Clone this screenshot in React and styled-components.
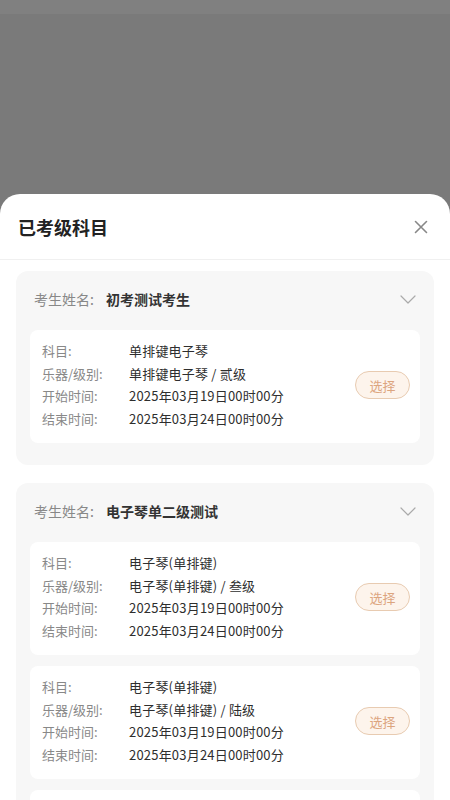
import React from "react";
import styled, { createGlobalStyle } from "styled-components";

const Global = createGlobalStyle`
  html, body { margin: 0; padding: 0; }
  body { font-family: "Noto Sans CJK SC", "Noto Sans", sans-serif; }
  * { box-sizing: border-box; }
`;

const Page = styled.div`
  width: 450px;
  height: 800px;
  background: #7a7a7a;
  display: flex;
  flex-direction: column;
  overflow: hidden;
`;

const StatusBar = styled.div`
  height: 14px;
  flex: none;
  background: #808080;
`;

const Backdrop = styled.div`
  height: 180px;
  flex: none;
`;

const Sheet = styled.div`
  flex: 1;
  background: #fff;
  border-radius: 20px 20px 0 0;
  display: flex;
  flex-direction: column;
  overflow: hidden;
`;

const SheetHeader = styled.div`
  height: 66px;
  flex: none;
  display: flex;
  align-items: center;
  justify-content: space-between;
  padding: 0 22px 0 18px;
  border-bottom: 1px solid #f0f0f0;
`;

const Title = styled.div`
  font-size: 18px;
  font-weight: 600;
  color: #222;
`;

const CloseBtn = styled.button`
  border: none;
  background: none;
  padding: 0;
  width: 14px;
  height: 14px;
  display: flex;
  cursor: pointer;
`;

const Content = styled.div`
  padding: 11px 16px 0;
  display: flex;
  flex-direction: column;
  gap: 18px;
`;

const Group = styled.div`
  background: #f7f7f7;
  border-radius: 12px;
  padding: 0 14px 22px;
  display: flex;
  flex-direction: column;
  gap: 11px;
`;

const GroupHeader = styled.div`
  height: 40px;
  margin-top: 8px;
  display: flex;
  align-items: center;
  padding: 0 4px;
  font-size: 14px;
`;

const GroupLabel = styled.span`
  color: #888;
  width: 72px;
`;

const GroupName = styled.span`
  color: #333;
  font-weight: 600;
  flex: 1;
`;

const Card = styled.div`
  background: #fff;
  border-radius: 8px;
  padding: 10px 10px 13px 12px;
  display: flex;
  align-items: center;
`;

const Rows = styled.div`
  flex: 1;
  display: flex;
  flex-direction: column;
`;

const Row = styled.div`
  display: flex;
  font-size: 13px;
  line-height: 22.5px;
`;

const Label = styled.span`
  width: 87px;
  color: #888;
`;

const Value = styled.span`
  color: #2e2e2e;
  letter-spacing: 0.2px;
`;

const SelectBtn = styled.button`
  width: 55px;
  height: 28px;
  border-radius: 14px;
  border: 1.5px solid #e8cbb1;
  background: #fdf4ec;
  color: #dca57f;
  font-family: inherit;
  font-size: 13px;
  padding: 0;
  cursor: pointer;
`;

const Close = () => (
  <svg width="14" height="14" viewBox="0 0 14 14">
    <path d="M1.5 1.5 L12.5 12.5 M12.5 1.5 L1.5 12.5" stroke="#888" strokeWidth="1.6" strokeLinecap="round" />
  </svg>
);

const Chevron = () => (
  <svg width="16" height="9" viewBox="0 0 16 9">
    <path d="M1 1 L8 8 L15 1" stroke="#aaa" strokeWidth="1.2" fill="none" strokeLinecap="round" strokeLinejoin="round" />
  </svg>
);

const data = [
  {
    name: "初考测试考生",
    items: [
      { subject: "单排键电子琴", level: "单排键电子琴 / 贰级", start: "2025年03月19日00时00分", end: "2025年03月24日00时00分" },
    ],
  },
  {
    name: "电子琴单二级测试",
    items: [
      { subject: "电子琴(单排键)", level: "电子琴(单排键) / 叁级", start: "2025年03月19日00时00分", end: "2025年03月24日00时00分" },
      { subject: "电子琴(单排键)", level: "电子琴(单排键) / 陆级", start: "2025年03月19日00时00分", end: "2025年03月24日00时00分" },
      { subject: "电子琴(单排键)", level: "电子琴(单排键) / 柒级", start: "2025年03月19日00时00分", end: "2025年03月24日00时00分" },
    ],
  },
];

export default function App() {
  return (
    <Page>
      <Global />
      <StatusBar />
      <Backdrop />
      <Sheet>
        <SheetHeader>
          <Title>已考级科目</Title>
          <CloseBtn aria-label="关闭"><Close /></CloseBtn>
        </SheetHeader>
        <Content>
          {data.map((g, gi) => (
            <Group key={gi}>
              <GroupHeader>
                <GroupLabel>考生姓名:</GroupLabel>
                <GroupName>{g.name}</GroupName>
                <Chevron />
              </GroupHeader>
              {g.items.map((it, ii) => (
                <Card key={ii}>
                  <Rows>
                    <Row><Label>科目:</Label><Value>{it.subject}</Value></Row>
                    <Row><Label>乐器/级别:</Label><Value>{it.level}</Value></Row>
                    <Row><Label>开始时间:</Label><Value>{it.start}</Value></Row>
                    <Row><Label>结束时间:</Label><Value>{it.end}</Value></Row>
                  </Rows>
                  <SelectBtn>选择</SelectBtn>
                </Card>
              ))}
            </Group>
          ))}
        </Content>
      </Sheet>
    </Page>
  );
}
